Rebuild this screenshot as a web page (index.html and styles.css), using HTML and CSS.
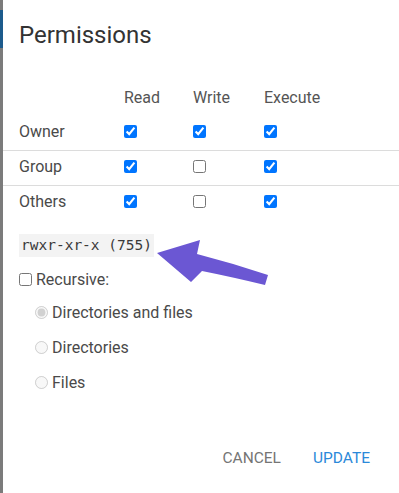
FILE: index.html
```html
<!DOCTYPE html>
<html>
<head>
<meta charset="utf-8">
<link rel="stylesheet" href="styles.css">
</head>
<body>
<div class="page">
  <div class="strip"><div class="strip-blue"></div></div>
  <div class="dialog">
    <h2 class="title">Permissions</h2>
    <div class="perm-table">
      <div class="row head"><span></span><span>Read</span><span>Write</span><span>Execute</span></div>
      <div class="row"><span>Owner</span><input type="checkbox" checked><input type="checkbox" checked><input type="checkbox" checked></div>
      <div class="row"><span>Group</span><input type="checkbox" checked><input type="checkbox"><input type="checkbox" checked></div>
      <div class="row last"><span>Others</span><input type="checkbox" checked><input type="checkbox"><input type="checkbox" checked></div>
    </div>
    <div class="code-wrap"><code class="code">rwxr-xr-x (755)</code></div>
    <label class="recursive"><input type="checkbox">Recursive:</label>
    <div class="radios">
      <label class="radio"><input type="radio" name="r" checked disabled>Directories and files</label>
      <label class="radio"><input type="radio" name="r" disabled>Directories</label>
      <label class="radio"><input type="radio" name="r" disabled>Files</label>
    </div>
    <div class="actions">
      <button class="btn cancel">Cancel</button>
      <button class="btn update">Update</button>
    </div>
  </div>
  <svg class="arrow" width="120" height="50" viewBox="150 238 120 50">
    <path d="M157,253 L200,240 L197,254 Q232,263 268,275 L265,285 Q232,277 202,271 L191,282 Z" fill="#6b57d3"/>
  </svg>
</div>
</body>
</html>
```
FILE: styles.css
```css
html, body {
  margin: 0;
  padding: 0;
  background: #fff;
}
body {
  font-family: Roboto, "Noto Sans", sans-serif;
  color: #444;
}
.page {
  position: relative;
  display: flex;
  width: 399px;
  height: 493px;
  overflow: hidden;
}
.strip {
  width: 3px;
  flex: none;
  background: #7b7b7b;
}
.strip-blue {
  margin-top: 10px;
  height: 38px;
  background: #1d5b8c;
}
.dialog {
  flex: 1;
  display: flex;
  flex-direction: column;
}
.title {
  margin: 21px 0 0 16px;
  font-size: 24px;
  line-height: 28px;
  font-weight: 400;
  color: #333;
}
.perm-table {
  margin-top: 33px;
}
.row {
  display: grid;
  grid-template-columns: 105px 69px 71px 1fr;
  align-items: center;
  height: 31px;
  padding: 0 0 3px 16px;
  border-bottom: 1px solid #dcdcdc;
  font-size: 16px;
  color: #4a4a4a;
}
.row.head {
  border-bottom: none;
  color: #555;
}
.row.last {
  border-bottom: none;
}
.row input {
  margin: 0;
  width: 13px;
  height: 13px;
}
.code-wrap {
  margin: 14px 0 0 16px;
}
.code {
  display: inline-block;
  background: #f3f3f3;
  font-family: "DejaVu Sans Mono", monospace;
  font-size: 14.5px;
  line-height: 23px;
  padding: 0 2px;
  color: #3a3a3a;
}
.recursive {
  display: flex;
  align-items: center;
  gap: 4px;
  height: 20px;
  margin: 12px 0 0 16px;
  font-size: 16px;
  color: #4a4a4a;
}
.recursive input {
  margin: 0;
}
.radios {
  margin-top: 6px;
  display: flex;
  flex-direction: column;
}
.radio {
  display: flex;
  align-items: center;
  gap: 4px;
  height: 35px;
  padding-left: 32px;
  font-size: 16px;
  color: #4a4a4a;
}
.radio input {
  margin: 0;
}
.actions {
  margin-top: 40px;
  display: flex;
  justify-content: flex-end;
  gap: 16px;
  padding-right: 21px;
}
.btn {
  background: none;
  border: none;
  height: 36px;
  padding: 0 8px;
  font-family: Roboto, sans-serif;
  font-size: 15.5px;
  letter-spacing: 0;
  text-transform: uppercase;
  cursor: pointer;
}
.cancel {
  color: #757575;
}
.update {
  color: #2b89d9;
}
.arrow {
  position: absolute;
  left: 150px;
  top: 238px;
}
```
